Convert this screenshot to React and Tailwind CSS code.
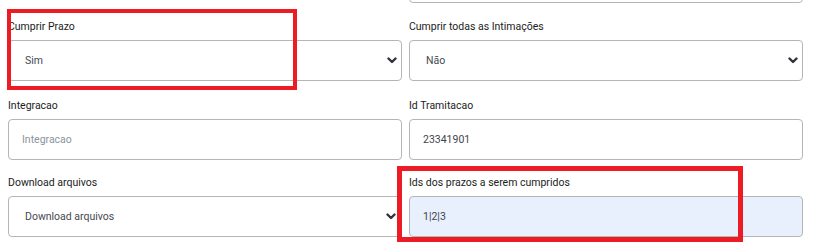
import React from 'react';

function Chevron() {
  return (
    <svg width="10" height="7" viewBox="0 0 10 7" className="shrink-0">
      <polyline points="1.5,1.5 5,5 8.5,1.5" fill="none" stroke="#2f343a" strokeWidth="2.4" strokeLinecap="round" strokeLinejoin="round" />
    </svg>
  );
}

function SelectBox({ value }) {
  return (
    <div className="h-[41px] border border-[#b5b5b5] rounded-[4px] bg-white flex items-center pl-[16px] pr-[4px]">
      <span className="flex-1 text-[#454a50]">{value}</span>
      <Chevron />
    </div>
  );
}

function InputBox({ value, placeholder, filled }) {
  return (
    <div
      className={
        filled
          ? 'h-[41px] border border-[#b5b5b5] rounded-[4px] bg-[#e8f0fe] flex items-center pl-[13px]'
          : 'h-[41px] border border-[#b5b5b5] rounded-[4px] bg-white flex items-center pl-[13px]'
      }
    >
      {value ? (
        <span className="text-[#3f444a]">{value}</span>
      ) : (
        <span className="text-[#8a94a0]">{placeholder}</span>
      )}
    </div>
  );
}

function Label({ children }) {
  return <div className="h-[16px] leading-[16px] text-[#1a1d21] mb-[5px]">{children}</div>;
}

export default function App() {
  return (
    <div className="relative w-[814px] h-[246px] bg-white overflow-hidden font-['Roboto','Liberation_Sans',sans-serif] text-[10.5px]">
      <div className="pl-[8px] pr-[11px]">
        {/* previous field, cut off at the top */}
        <div className="grid grid-cols-2 gap-x-[7px] -mt-[38px] mb-[16px]">
          <div />
          <div className="h-[41px] border border-[#b5b5b5] rounded-[4px]" />
        </div>

        <div className="grid grid-cols-2 gap-x-[7px] mb-[17px]">
          <div>
            <Label>Cumprir Prazo</Label>
            <SelectBox value="Sim" />
          </div>
          <div>
            <Label>Cumprir todas as Intimações</Label>
            <SelectBox value="Não" />
          </div>
        </div>

        <div className="grid grid-cols-2 gap-x-[7px] mb-[15px]">
          <div>
            <Label>Integracao</Label>
            <InputBox placeholder="Integracao" />
          </div>
          <div>
            <Label>Id Tramitacao</Label>
            <InputBox value="23341901" />
          </div>
        </div>

        <div className="grid grid-cols-2 gap-x-[7px]">
          <div className="pr-[1px]">
            <Label>Download arquivos</Label>
            <SelectBox value="Download arquivos" />
          </div>
          <div>
            <Label>Ids dos prazos a serem cumpridos</Label>
            <InputBox value="1|2|3" filled />
          </div>
        </div>
      </div>

      {/* annotation frames */}
      <div className="absolute left-[7px] top-[9px] w-[290px] h-[81px] border-[4px] border-[#ed1c24]" />
      <div className="absolute left-[397px] top-[166px] w-[346px] h-[76px] border-[5px] border-[#ed1c24]" />
    </div>
  );
}
